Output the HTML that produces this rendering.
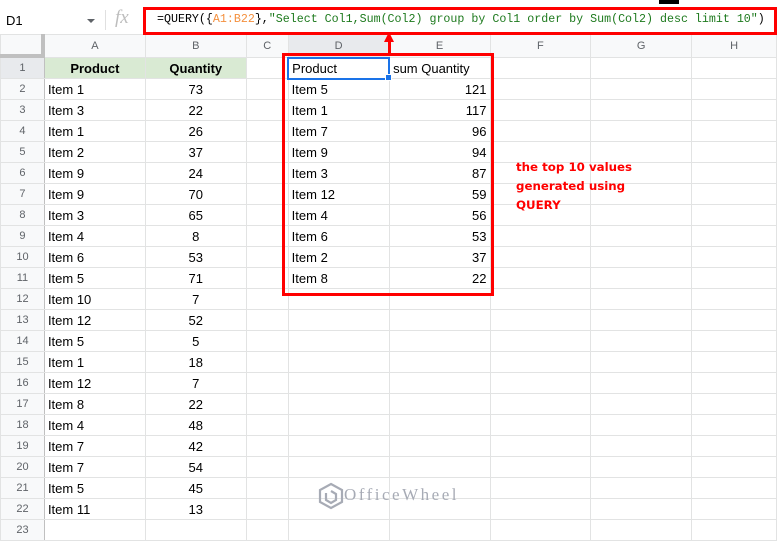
<!DOCTYPE html>
<html><head><meta charset="utf-8"><style>
body{margin:0;width:777px;height:537px;overflow:hidden;background:#fff;font-family:"Liberation Sans",Arial,sans-serif;position:relative}
.fb{position:absolute;left:0;top:0;width:777px;height:34px;background:#fff;border-bottom:1px solid #e0e0e0}
table{position:absolute;left:0;top:34px;border-collapse:collapse;table-layout:fixed;font-size:13px;color:#000}
td{border:1px solid #e2e3e3;height:20px;padding:0 3px;white-space:nowrap;overflow:hidden;box-sizing:border-box}
tr td{height:21px}
tr.h td{height:23px;background:#f8f9fa;color:#5f6368;text-align:center;font-size:11px}
td.r{background:#f8f9fa;color:#5f6368;text-align:center;font-size:11px;border-right:1px solid #c0c0c0}
.n{text-align:right}.m{text-align:center}
.g{background:#d9ead3!important;font-weight:bold;text-align:center;font-size:13px;color:#000}
.sel{background:#e8eaed!important}
</style></head><body>
<div class="fb">
<div style="position:absolute;left:6px;top:13px;font-size:13px;color:#000">D1</div>
<div style="position:absolute;left:87px;top:19px;width:0;height:0;border-left:4px solid transparent;border-right:4px solid transparent;border-top:4px solid #5f6368"></div>
<div style="position:absolute;left:105px;top:10px;width:1px;height:20px;background:#e0e0e0"></div>
<div style="position:absolute;left:115px;top:7px;font-family:'Liberation Serif',serif;font-style:italic;font-size:19px;color:#bdbdbd">fx</div>
<div style="position:absolute;left:157px;top:13px;white-space:nowrap;font-family:'Liberation Mono',monospace;font-size:11.65px;color:#000">=QUERY({<span style="color:#f4903e">A1:B22</span>},<span style="color:#1e7a1e">"Select Col1,Sum(Col2) group by Col1 order by Sum(Col2) desc limit 10"</span>)</div>
<div style="position:absolute;left:659px;top:0;width:20px;height:4px;background:#000"></div>
</div>
<table>
<colgroup><col style="width:44px"><col style="width:101px"><col style="width:101px"><col style="width:42px"><col style="width:101px"><col style="width:101px"><col style="width:101px"><col style="width:101px"><col style="width:85px"></colgroup>
<tr class="h"><td></td><td>A</td><td>B</td><td>C</td><td class="sel">D</td><td>E</td><td>F</td><td>G</td><td>H</td></tr>
<tr><td class="r sel">1</td><td class="g">Product</td><td class="g">Quantity</td><td></td><td style="border:2px solid #1a73e8">Product</td><td>sum Quantity</td><td></td><td></td><td></td></tr>
<tr><td class="r">2</td><td>Item 1</td><td class="m">73</td><td></td><td>Item 5</td><td class="n">121</td><td></td><td></td><td></td></tr>
<tr><td class="r">3</td><td>Item 3</td><td class="m">22</td><td></td><td>Item 1</td><td class="n">117</td><td></td><td></td><td></td></tr>
<tr><td class="r">4</td><td>Item 1</td><td class="m">26</td><td></td><td>Item 7</td><td class="n">96</td><td></td><td></td><td></td></tr>
<tr><td class="r">5</td><td>Item 2</td><td class="m">37</td><td></td><td>Item 9</td><td class="n">94</td><td></td><td></td><td></td></tr>
<tr><td class="r">6</td><td>Item 9</td><td class="m">24</td><td></td><td>Item 3</td><td class="n">87</td><td></td><td></td><td></td></tr>
<tr><td class="r">7</td><td>Item 9</td><td class="m">70</td><td></td><td>Item 12</td><td class="n">59</td><td></td><td></td><td></td></tr>
<tr><td class="r">8</td><td>Item 3</td><td class="m">65</td><td></td><td>Item 4</td><td class="n">56</td><td></td><td></td><td></td></tr>
<tr><td class="r">9</td><td>Item 4</td><td class="m">8</td><td></td><td>Item 6</td><td class="n">53</td><td></td><td></td><td></td></tr>
<tr><td class="r">10</td><td>Item 6</td><td class="m">53</td><td></td><td>Item 2</td><td class="n">37</td><td></td><td></td><td></td></tr>
<tr><td class="r">11</td><td>Item 5</td><td class="m">71</td><td></td><td>Item 8</td><td class="n">22</td><td></td><td></td><td></td></tr>
<tr><td class="r">12</td><td>Item 10</td><td class="m">7</td><td></td><td></td><td></td><td></td><td></td><td></td></tr>
<tr><td class="r">13</td><td>Item 12</td><td class="m">52</td><td></td><td></td><td></td><td></td><td></td><td></td></tr>
<tr><td class="r">14</td><td>Item 5</td><td class="m">5</td><td></td><td></td><td></td><td></td><td></td><td></td></tr>
<tr><td class="r">15</td><td>Item 1</td><td class="m">18</td><td></td><td></td><td></td><td></td><td></td><td></td></tr>
<tr><td class="r">16</td><td>Item 12</td><td class="m">7</td><td></td><td></td><td></td><td></td><td></td><td></td></tr>
<tr><td class="r">17</td><td>Item 8</td><td class="m">22</td><td></td><td></td><td></td><td></td><td></td><td></td></tr>
<tr><td class="r">18</td><td>Item 4</td><td class="m">48</td><td></td><td></td><td></td><td></td><td></td><td></td></tr>
<tr><td class="r">19</td><td>Item 7</td><td class="m">42</td><td></td><td></td><td></td><td></td><td></td><td></td></tr>
<tr><td class="r">20</td><td>Item 7</td><td class="m">54</td><td></td><td></td><td></td><td></td><td></td><td></td></tr>
<tr><td class="r">21</td><td>Item 5</td><td class="m">45</td><td></td><td></td><td></td><td></td><td></td><td></td></tr>
<tr><td class="r">22</td><td>Item 11</td><td class="m">13</td><td></td><td></td><td></td><td></td><td></td><td></td></tr>
<tr><td class="r">23</td><td></td><td></td><td></td><td></td><td></td><td></td><td></td><td></td></tr>
</table>
<div style="position:absolute;left:41px;top:34px;width:4px;height:23px;background:#c0c0c0"></div>
<div style="position:absolute;left:0;top:54px;width:45px;height:4px;background:#c0c0c0"></div>
<div style="position:absolute;left:385px;top:74px;width:5px;height:5px;background:#1a73e8;border:1px solid #fff"></div>
<div style="position:absolute;left:143px;top:7px;width:628px;height:22px;border:3px solid #f00"></div>
<div style="position:absolute;left:282px;top:53px;width:206px;height:237px;border:3px solid #f00"></div>
<div style="position:absolute;left:388px;top:40px;width:3px;height:14px;background:#f00"></div>
<div style="position:absolute;left:384px;top:32px;width:0;height:0;border-left:5.5px solid transparent;border-right:5.5px solid transparent;border-bottom:10px solid #f00"></div>
<div style="position:absolute;left:516px;top:158px;font-family:'DejaVu Sans',sans-serif;font-weight:bold;font-size:11.8px;line-height:19px;color:#f00">the top 10 values<br>generated using<br>QUERY</div>
<div style="position:absolute;left:318px;top:482px;font-family:'Liberation Serif',serif;font-size:17px;letter-spacing:2.5px;color:#a7abb5">
<svg width="26" height="28" viewBox="0 0 26 28" style="vertical-align:middle"><path d="M13 2 L24 8 V20 L13 26 L2 20 V8 Z M8 11 V18 L13 21 L18 18 V12 L13 9" fill="none" stroke="#a7abb5" stroke-width="2.2"/></svg>OfficeWheel</div>
</body></html>
